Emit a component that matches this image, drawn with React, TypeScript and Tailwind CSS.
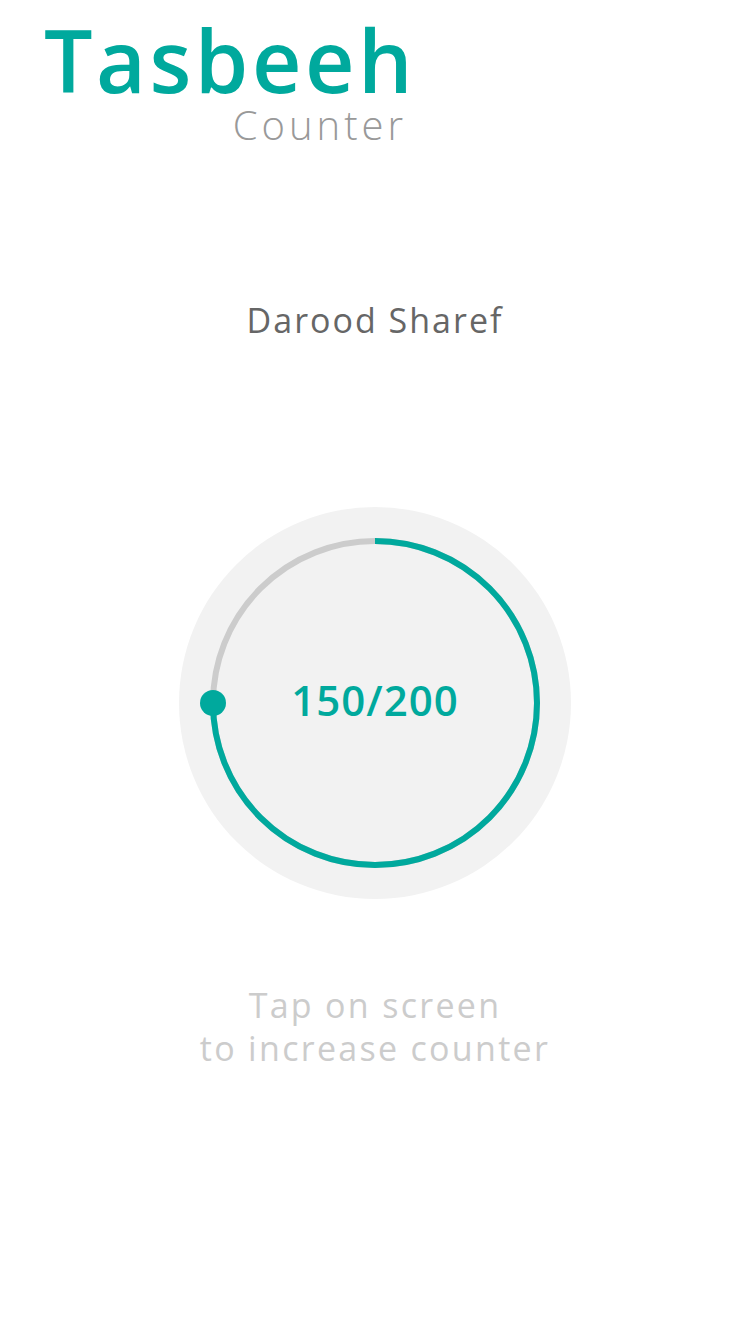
const TEAL = '#00a99d';

const ProgressRing = ({ count, total }: { count: number; total: number }) => {
  const r = 162;
  const c = 2 * Math.PI * r;
  const done = (count / total) * c;
  // knob sits where the filled arc ends, measured clockwise from 12 o'clock
  const angle = (count / total) * 2 * Math.PI - Math.PI / 2;
  const kx = 196 + r * Math.cos(angle);
  const ky = 196 + r * Math.sin(angle);

  return (
    <svg width="392" height="392" viewBox="0 0 392 392" className="absolute inset-0">
      <circle cx="196" cy="196" r={r} fill="none" stroke="#cccccc" strokeWidth="6" />
      <circle
        cx="196"
        cy="196"
        r={r}
        fill="none"
        stroke={TEAL}
        strokeWidth="6"
        strokeDasharray={`${done} ${c}`}
        transform="rotate(-90 196 196)"
      />
      <circle cx={kx} cy={ky} r="13" fill={TEAL} />
    </svg>
  );
};

export default function App() {
  return (
    <div className="flex min-h-[1334px] w-[750px] flex-col bg-white font-['Open_Sans',sans-serif]">
      <header className="pl-[44px] pt-[17px]">
        <div className="inline-flex flex-col items-end">
          <h1 className="text-[86px] font-semibold leading-[86px] tracking-[3.5px] text-[#00a99d]">Tasbeeh</h1>
          <p className="mt-[2px] pr-[9px] text-[40px] font-light leading-[40px] tracking-[4px] text-[#999999]">Counter</p>
        </div>
      </header>

      <p className="mt-[158px] text-center text-[34px] leading-[34px] tracking-[2px] text-[#666666]">Darood Sharef</p>

      <div className="relative mx-auto mt-[170px] flex h-[392px] w-[392px] items-center justify-center rounded-full bg-[#f2f2f2]">
        <ProgressRing count={150} total={200} />
        <span className="relative mb-[6px] text-[42px] font-semibold leading-none tracking-[1px] text-[#00a99d]">
          150/200
        </span>
      </div>

      <p className="mt-[85px] text-center text-[34px] leading-[43px] tracking-[2.3px] text-[#cccccc]">
        Tap on screen
        <br />
        to increase counter
      </p>
    </div>
  );
}
